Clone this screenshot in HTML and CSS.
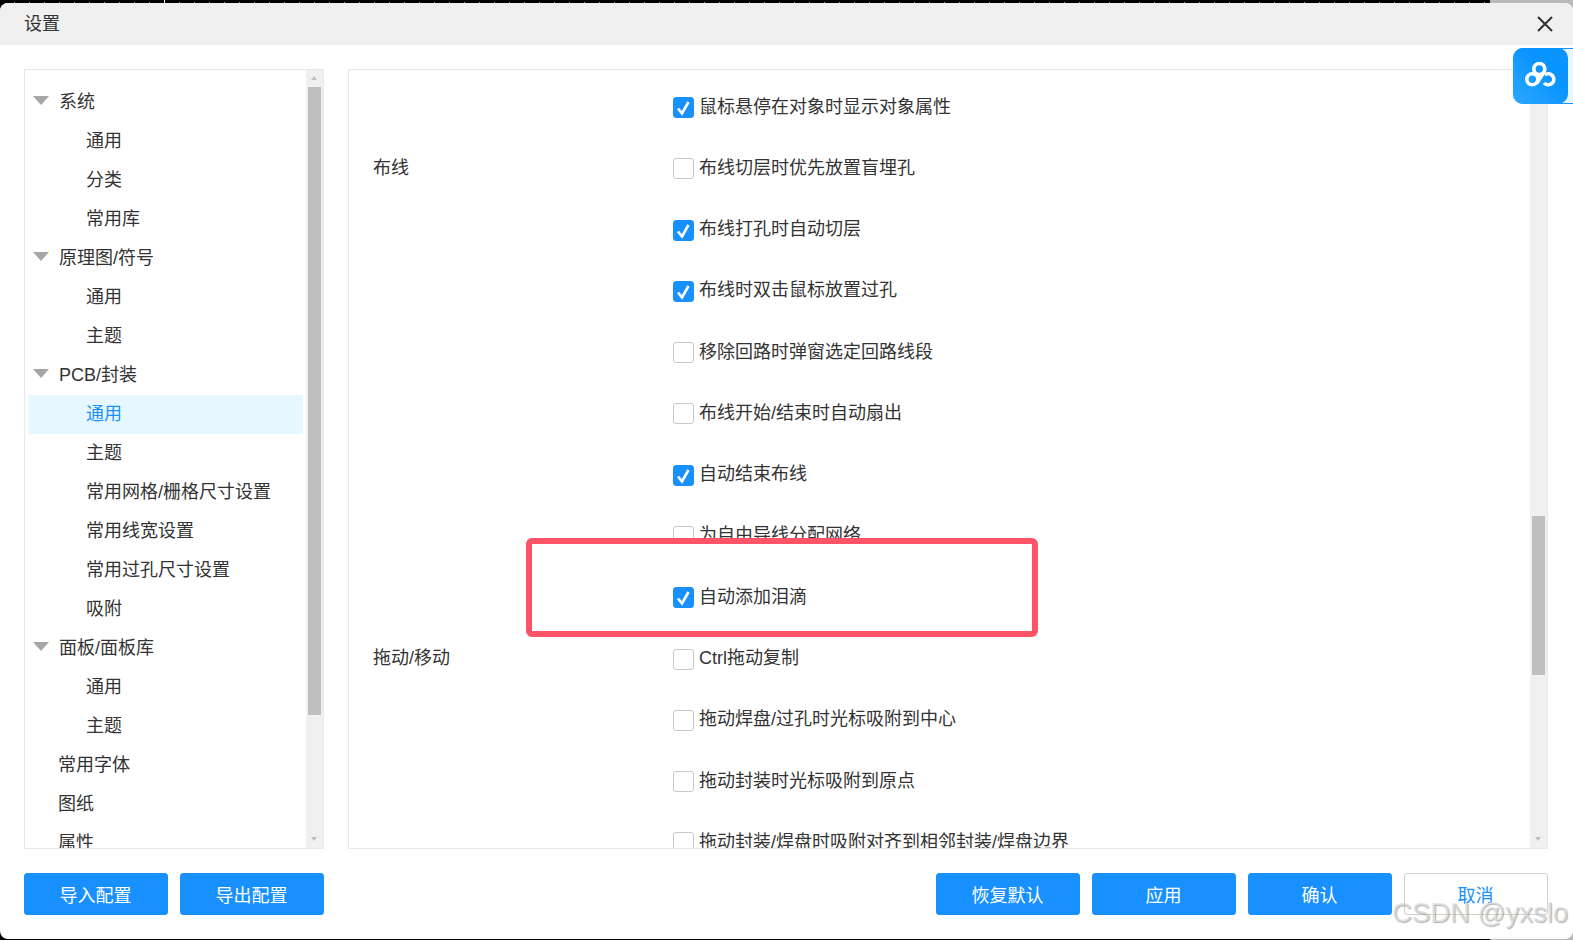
FILE: index.html
```html
<!DOCTYPE html>
<html lang="zh-CN">
<head>
<meta charset="utf-8">
<title>设置</title>
<link rel="stylesheet" href="styles.css">
</head>
<body>
<div class="backdrop">
  <div class="dialog">
    <header class="dialog-head">
      <span>设置</span>
      <svg class="close" viewBox="0 0 16 16" width="16" height="16"><path d="M1 1L15 15M15 1L1 15"/></svg>
    </header>
    <main class="dialog-main">
      <nav class="panel tree">
        <div class="scroll-clip tree-clip">
          <div class="node top"><i class="caret"></i>系统</div>
          <div class="node sub">通用</div>
          <div class="node sub">分类</div>
          <div class="node sub">常用库</div>
          <div class="node top"><i class="caret"></i>原理图/符号</div>
          <div class="node sub">通用</div>
          <div class="node sub">主题</div>
          <div class="node top"><i class="caret"></i>PCB/封装</div>
          <div class="node sub selected">通用</div>
          <div class="node sub">主题</div>
          <div class="node sub">常用网格/栅格尺寸设置</div>
          <div class="node sub">常用线宽设置</div>
          <div class="node sub">常用过孔尺寸设置</div>
          <div class="node sub">吸附</div>
          <div class="node top"><i class="caret"></i>面板/面板库</div>
          <div class="node sub">通用</div>
          <div class="node sub">主题</div>
          <div class="node top plain">常用字体</div>
          <div class="node top plain">图纸</div>
          <div class="node top plain">属性</div>
        </div>
        <div class="scrollbar"><i class="arrow up"></i><div class="thumb tree-thumb"></div><i class="arrow down"></i></div>
      </nav>
      <section class="panel options">
        <div class="scroll-clip options-clip">
          <div class="row"><span class="label"></span><span class="box on"><svg viewBox="0 0 21 21"><path d="M5 11.5L9 16.5L15.5 5"/></svg></span><span>鼠标悬停在对象时显示对象属性</span></div>
          <div class="row"><span class="label">布线</span><span class="box"></span><span>布线切层时优先放置盲埋孔</span></div>
          <div class="row"><span class="label"></span><span class="box on"><svg viewBox="0 0 21 21"><path d="M5 11.5L9 16.5L15.5 5"/></svg></span><span>布线打孔时自动切层</span></div>
          <div class="row"><span class="label"></span><span class="box on"><svg viewBox="0 0 21 21"><path d="M5 11.5L9 16.5L15.5 5"/></svg></span><span>布线时双击鼠标放置过孔</span></div>
          <div class="row"><span class="label"></span><span class="box"></span><span>移除回路时弹窗选定回路线段</span></div>
          <div class="row"><span class="label"></span><span class="box"></span><span>布线开始/结束时自动扇出</span></div>
          <div class="row"><span class="label"></span><span class="box on"><svg viewBox="0 0 21 21"><path d="M5 11.5L9 16.5L15.5 5"/></svg></span><span>自动结束布线</span></div>
          <div class="row"><span class="label"></span><span class="box"></span><span>为自由导线分配网络</span></div>
          <div class="row highlighted"><span class="label"></span><span class="box on"><svg viewBox="0 0 21 21"><path d="M5 11.5L9 16.5L15.5 5"/></svg></span><span>自动添加泪滴</span></div>
          <div class="row"><span class="label">拖动/移动</span><span class="box"></span><span>Ctrl拖动复制</span></div>
          <div class="row"><span class="label"></span><span class="box"></span><span>拖动焊盘/过孔时光标吸附到中心</span></div>
          <div class="row"><span class="label"></span><span class="box"></span><span>拖动封装时光标吸附到原点</span></div>
          <div class="row"><span class="label"></span><span class="box"></span><span>拖动封装/焊盘时吸附对齐到相邻封装/焊盘边界</span></div>
        </div>
        <div class="scrollbar"><i class="arrow up"></i><div class="thumb options-thumb"></div><i class="arrow down"></i></div>
      </section>
    </main>
    <footer class="dialog-foot">
      <div class="btn-group">
        <button class="btn">导入配置</button>
        <button class="btn">导出配置</button>
      </div>
      <div class="btn-group">
        <button class="btn">恢复默认</button>
        <button class="btn">应用</button>
        <button class="btn">确认</button>
        <button class="btn ghost">取消</button>
      </div>
    </footer>
  </div>
  <div class="red-frame"></div>
  <div class="cloud-tab">
    <div class="cloud-icon">
      <svg viewBox="0 0 55 55" width="55" height="55"><circle cx="26.3" cy="21" r="5.5"/><circle cx="19.3" cy="31.3" r="5.5"/><path d="M31 24L24 35"/><path d="M31.1 34.8A5.5 5.5 0 1 0 31.8 27"/></svg>
    </div>
  </div>
  <div class="watermark">CSDN @yxslo</div>
</div>
</body>
</html>
```
FILE: styles.css
```css
* { box-sizing: border-box; }
html, body { margin: 0; height: 100%; overflow: hidden; }
body {
  font-family: "Liberation Sans", "Noto Sans CJK SC", sans-serif;
  font-size: 18px;
  color: #333;
}
.backdrop {
  position: relative;
  width: 1573px;
  height: 940px;
  padding-top: 3px;
  background:
    linear-gradient(#fff, #fff) 164px 0 / 1px 3px no-repeat,
    repeating-linear-gradient(90deg, #000 0 14px, #999 14px 15px) 0 2px / 1490px 1px no-repeat,
    linear-gradient(90deg, #000 0 1490px, #b9b9b9 1490px);
  overflow: hidden;
}
.dialog {
  width: 1573px;
  height: 936px;
  background: #fff;
  border-radius: 8px;
  overflow: hidden;
  display: flex;
  flex-direction: column;
}
.dialog-head {
  flex: none;
  height: 42px;
  background: #f0f0f0;
  padding: 0 20px 0 24px;
  display: flex;
  align-items: center;
  justify-content: space-between;
}
.dialog-head span { line-height: 42px; }
.close { fill: none; stroke: #333; stroke-width: 2; }
.dialog-main {
  flex: none;
  height: 780px;
  margin: 24px 25px 0 24px;
  display: flex;
  gap: 24px;
}
.panel {
  border: 1px solid #e8e8e8;
  display: flex;
  height: 100%;
  min-width: 0;
}
.tree { width: 300px; flex: none; }
.options { flex: 1; }
.scroll-clip { flex: 1; min-width: 0; overflow: hidden; }
.tree-clip { padding: 12.5px 3px 0; }
.options-clip { padding: 4px 0 0 24px; }
.node {
  height: 39px;
  line-height: 39px;
  white-space: nowrap;
}
.node.top { display: flex; align-items: center; padding-left: 5px; line-height: 37px; }
.node.top.plain { padding-left: 30px; }
.caret {
  width: 0;
  height: 0;
  border-left: 8.5px solid transparent;
  border-right: 8.5px solid transparent;
  border-top: 9px solid #a6a6a6;
  margin-right: 10px;
  margin-top: -3px;
}
.node.sub { padding-left: 58px; }
.node.selected { background: #e6f7ff; color: #1890ff; }
.scrollbar {
  flex: none;
  width: 17px;
  background: #f0f0f0;
  position: relative;
  padding: 17px 2px 0;
}
.thumb { width: 13px; background: #bfbfbf; }
.tree-thumb { height: 628px; }
.options-thumb { height: 159px; margin-top: 429px; }
.arrow {
  position: absolute;
  left: 5px;
  width: 0;
  height: 0;
  border-left: 3.5px solid transparent;
  border-right: 3.5px solid transparent;
}
.arrow.up { top: 6px; border-bottom: 4px solid #c0c0c0; }
.arrow.down { bottom: 7px; border-top: 4px solid #c0c0c0; }
.row {
  height: 61.28px;
  display: flex;
  align-items: center;
  white-space: nowrap;
}
.row .label { width: 300px; flex: none; }
.box {
  flex: none;
  width: 21px;
  height: 21px;
  margin: 6px 5px 0 0;
  border: 1px solid #c8c8c8;
  border-radius: 3px;
  background: #fff;
}
.box.on { background: #1890ff; border-color: #1890ff; }
.box svg {
  display: block;
  width: 21px;
  height: 21px;
  margin: -1px;
  fill: none;
  stroke: #fff;
  stroke-width: 2.6;
}
.highlighted { position: relative; z-index: 3; }
.dialog-foot {
  flex: none;
  margin: 24px 25px 0 24px;
  display: flex;
  justify-content: space-between;
}
.btn-group { display: flex; gap: 12px; }
.btn {
  width: 144px;
  height: 42px;
  padding: 0 1px 0 0;
  background: #1890ff;
  border: 1px solid #1890ff;
  border-radius: 3px;
  color: #fff;
  font: inherit;
}
.btn.ghost { background: #fff; border-color: #d0d0d0; color: #1890ff; }
.red-frame {
  position: absolute;
  left: 526px;
  top: 538px;
  width: 512px;
  height: 99px;
  border: 6px solid #ff5468;
  border-radius: 6px;
  background: #fff;
  z-index: 1;
}
.cloud-tab {
  position: absolute;
  left: 1513px;
  top: 48px;
  width: 60px;
  height: 56px;
  background: #eaf6ff;
  border-top: 1px solid #1890ff;
  border-bottom: 1px solid #1890ff;
  border-radius: 10px 0 0 10px;
  z-index: 4;
}
.cloud-icon {
  position: absolute;
  left: 0;
  top: -1px;
  width: 55px;
  height: 56px;
  border-radius: 10px;
  background: linear-gradient(45deg, #2ba8ff, #0a94ff 60%);
}
.cloud-icon svg { display: block; fill: none; stroke: #fff; stroke-width: 3.6; }
.watermark {
  position: absolute;
  left: 1392px;
  top: 896px;
  font-size: 27.5px;
  line-height: 34px;
  color: rgba(225, 225, 225, 0.75);
  text-shadow: 1px 1px 1px rgba(0, 0, 0, 0.3);
  white-space: nowrap;
  z-index: 5;
}
```
